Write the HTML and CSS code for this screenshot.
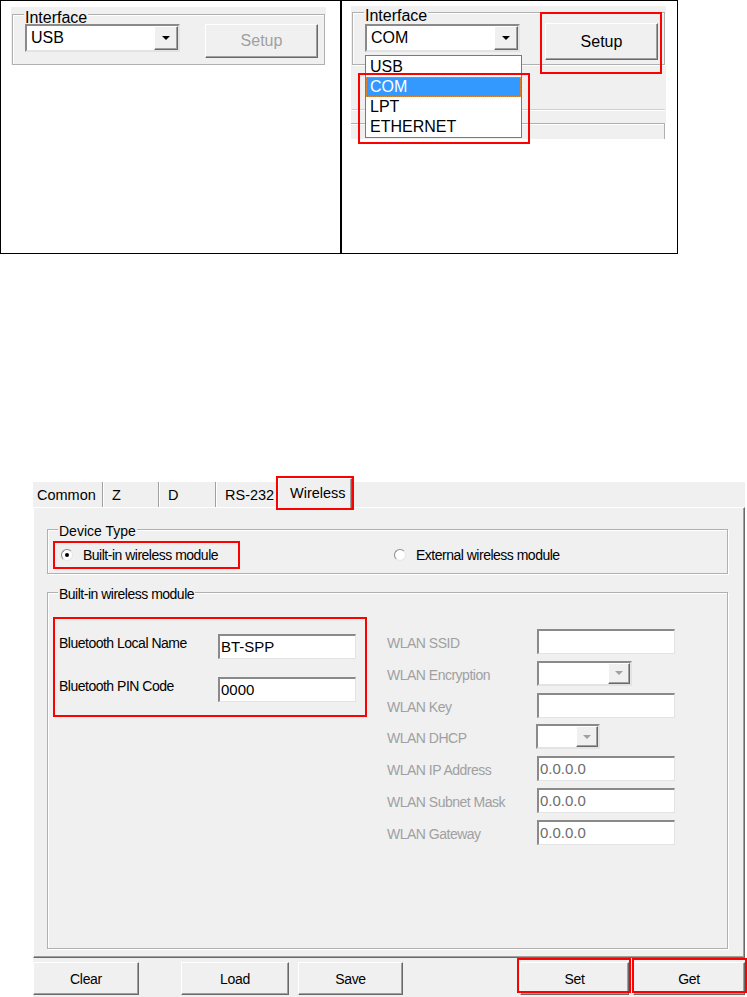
FILE: index.html
```html
<!DOCTYPE html>
<html>
<head>
    <meta charset="utf-8">
    <title>Printer interface settings</title>
    <link rel="stylesheet" href="styles.css">
</head>
<body>
    <div class="cmp">
        <div class="cell">
            <div class="win win-a">
                <div class="grp">
                    <span class="glabel">Interface</span>
                    <div class="iface">
                        <div class="combo"><span>USB</span><span class="drop"></span></div>
                        <button class="btn setup" disabled>Setup</button>
                    </div>
                </div>
            </div>
        </div>
        <div class="cell">
            <div class="win win-b">
                <div class="grp">
                    <span class="glabel">Interface</span>
                    <div class="iface">
                        <div class="combo"><span>COM</span><span class="drop"></span></div>
                        <button class="btn setup tall">Setup</button>
                    </div>
                </div>
                <div class="rule"></div>
                <div class="grp-cut"></div>
            </div>
            <ul class="droplist">
                <li>USB</li>
                <li class="sel">COM</li>
                <li>LPT</li>
                <li>ETHERNET</li>
            </ul>
            <div class="mark mark-setup"></div>
            <div class="mark mark-list"></div>
        </div>
    </div>

    <div class="dlg">
        <div class="tabs">
            <span class="tab t-common">Common</span>
            <span class="tab t-z">Z</span>
            <span class="tab t-d">D</span>
            <span class="tab t-rs">RS-232</span>
            <span class="tab on">Wireless</span>
        </div>
        <div class="page">
            <div class="grp dev">
                <span class="glabel">Device Type</span>
                <div class="dev-row">
                    <label class="radio hl"><span class="dot on"></span>Built-in wireless module</label>
                    <label class="radio ext"><span class="dot"></span>External wireless module</label>
                </div>
            </div>
            <div class="grp mod">
                <span class="glabel tight">Built-in wireless module</span>
                <div class="mod-cols">
                    <div class="bt">
                        <div class="frow"><span class="flabel">Bluetooth Local Name</span><span class="field">BT-SPP</span></div>
                        <div class="frow"><span class="flabel">Bluetooth PIN Code</span><span class="field">0000</span></div>
                    </div>
                    <div class="wlan">
                        <div class="frow"><span class="flabel">WLAN SSID</span><span class="field"></span></div>
                        <div class="frow"><span class="flabel">WLAN Encryption</span><span class="combo sm enc"><span class="drop off"></span></span></div>
                        <div class="frow"><span class="flabel">WLAN Key</span><span class="field"></span></div>
                        <div class="frow"><span class="flabel">WLAN DHCP</span><span class="combo sm dhcp"><span class="drop off"></span></span></div>
                        <div class="frow"><span class="flabel">WLAN IP Address</span><span class="field">0.0.0.0</span></div>
                        <div class="frow"><span class="flabel">WLAN Subnet Mask</span><span class="field">0.0.0.0</span></div>
                        <div class="frow"><span class="flabel">WLAN Gateway</span><span class="field">0.0.0.0</span></div>
                    </div>
                </div>
            </div>
        </div>
        <div class="actions">
            <button class="btn w-clear">Clear</button>
            <button class="btn w-load">Load</button>
            <button class="btn w-save">Save</button>
            <button class="btn w-set">Set</button>
            <button class="btn w-get">Get</button>
            <div class="mark mark-set"></div>
            <div class="mark mark-get"></div>
        </div>
    </div>
</body>
</html>
```

FILE: styles.css
```css
body{
    margin: 0;
    font-family: "Liberation Sans", Arial, Helvetica, sans-serif;
    color: #000;
    background: #fff;
}

/* top comparison table */
.cmp{
    display: grid;
    grid-template-columns: 339px 337px;
    width: 678px;
    height: 254px;
    box-sizing: border-box;
    border: 1px solid #000;
}
.cell{
    position: relative;
    padding: 6px 0 0 10px;
}
.cell + .cell{
    border-left: 2px solid #000;
    padding: 5px 0 0 9px;
}

.win{
    width: 315px;
    box-sizing: border-box;
    background: #f0f0f0;
    padding: 0 1px;
    overflow: hidden;
}
.win-a{
    height: 58px;
    padding-top: 7px;
}
.win-a .grp{
    height: 51px;
    box-sizing: border-box;
}
.win-b{
    height: 133px;
    padding-top: 6px;
}
.win-b .grp{
    height: 53px;
    box-sizing: border-box;
}

/* group boxes */
.grp{
    border: 1px solid #b0b0b0;
    box-shadow: inset 1px 1px 0 #fff, 1px 1px 0 #fff;
}
.glabel{
    display: block;
    width: fit-content;
    background: #f0f0f0;
    padding: 0 1px;
    font-size: 14px;
    line-height: 16px;
    margin: -7px 0 0 10px;
}
.glabel.tight{
    letter-spacing: -0.5px;
}
.win .glabel{
    font-size: 16px;
    line-height: 14px;
    margin: -4px 0 0 11px;
}

.iface{
    display: flex;
    align-items: flex-start;
    padding-left: 12px;
    margin-top: -1px;
}
.win-b .iface{
    margin-top: 1px;
}

.combo{
    display: flex;
    align-items: center;
    justify-content: space-between;
    width: 155px;
    height: 28px;
    box-sizing: border-box;
    background: #fff;
    border: 2px solid;
    border-color: #8a8a8a #e3e3e3 #e3e3e3 #8a8a8a;
    padding-left: 4px;
    font-size: 16px;
}
.drop{
    display: flex;
    align-items: center;
    justify-content: center;
    width: 24px;
    height: 24px;
    box-sizing: border-box;
    background: #f0f0f0;
    border: 1px solid;
    border-color: #fff #696969 #696969 #fff;
    box-shadow: inset -1px -1px 0 #a0a0a0;
}
.drop::after{
    content: "";
    border-left: 4px solid transparent;
    border-right: 4px solid transparent;
    border-top: 4px solid #000;
}
.drop.off::after{
    border-top-color: #a0a0a0;
}

.btn{
    font-family: inherit;
    font-size: 14px;
    letter-spacing: -0.3px;
    color: #000;
    background: #f0f0f0;
    border: 1px solid;
    border-color: #fff #696969 #696969 #fff;
    box-shadow: inset -1px -1px 0 #a0a0a0;
    padding: 0;
    height: 33px;
}
.btn:disabled{
    color: #a0a0a0;
}
.setup{
    font-size: 16px;
    letter-spacing: 0;
    width: 113px;
    height: 34px;
    margin-left: 25px;
}
.setup.tall{
    height: 37px;
    margin-top: -1px;
}

.rule{
    margin-top: 44px;
    border-top: 1px solid #cfcfcf;
    border-bottom: 1px solid #fff;
}
.grp-cut{
    margin: 12px 0 0 -2px;
    height: 20px;
    border-top: 1px solid #b0b0b0;
    border-right: 1px solid #b0b0b0;
    box-shadow: inset 0 1px 0 #fff, 1px 0 0 #fff;
}

.droplist{
    position: absolute;
    left: 23px;
    top: 54px;
    width: 157px;
    height: 83px;
    box-sizing: border-box;
    margin: 0;
    padding: 1px 0 0;
    list-style: none;
    background: #fff;
    border: 1px solid #7a7a7a;
    font-size: 16px;
    line-height: 20px;
}
.droplist li{
    padding-left: 4px;
}
.droplist .sel{
    background: #3399ff;
    color: #fff;
    outline: 1px dotted #e08a3a;
    outline-offset: -1px;
}

/* red callouts */
.mark{
    position: absolute;
    box-sizing: border-box;
    border: 2px solid #f00;
}
.mark-setup{
    left: 198px;
    top: 11px;
    width: 122px;
    height: 62px;
}
.mark-list{
    left: 16px;
    top: 72px;
    width: 172px;
    height: 71px;
}

/* wireless dialog */
.dlg{
    width: 712px;
    margin: 224px 0 0 33px;
    background: #f0f0f0;
}
.tabs{
    display: flex;
    align-items: flex-end;
    height: 29px;
    background: linear-gradient(#fff 4px, #f0f0f0 4px);
}
.tab{
    height: 25px;
    box-sizing: border-box;
    padding: 5px 0 0 9px;
    font-size: 14.5px;
    line-height: 16px;
    border-right: 1px solid #a0a0a0;
    box-shadow: 1px 0 0 #fff;
}
.t-common{ width: 70px; padding-left: 4px; }
.t-z{ width: 56px; }
.t-d{ width: 57px; }
.t-rs{ width: 62px; }
.tab.on{
    position: relative;
    z-index: 1;
    width: 74px;
    height: 30px;
    margin-bottom: -1px;
    padding: 6px 0 0 11px;
    background: #f0f0f0;
    border-top: 1px solid #fff;
    border-left: 1px solid #fff;
    border-right: 1px solid #696969;
    box-shadow: inset -1px 0 0 #a0a0a0;
    outline: 2px solid #f00;
}

.page{
    display: flex;
    flex-direction: column;
    height: 451px;
    box-sizing: border-box;
    border: 1px solid #fff;
    border-right-color: #696969;
    border-bottom-color: #696969;
    box-shadow: inset -1px -1px 0 #a0a0a0;
    padding: 21px 16px 8px 13px;
}

.dev-row{
    display: flex;
    align-items: center;
    margin-top: 2px;
    padding: 0 0 4px 5px;
}
.radio{
    display: flex;
    align-items: center;
    font-size: 14px;
    letter-spacing: -0.5px;
}
.radio.hl{
    width: 187px;
    height: 28px;
    box-sizing: border-box;
    border: 2px solid #f00;
    padding-left: 6px;
}
.radio.ext{
    margin-left: 154px;
}
.dot{
    display: flex;
    align-items: center;
    justify-content: center;
    width: 12px;
    height: 12px;
    box-sizing: border-box;
    border-radius: 50%;
    background: #fff;
    border: 1px solid;
    border-color: #8a8a8a #e6e6e6 #e6e6e6 #8a8a8a;
    margin-right: 10px;
}
.dot.on::after{
    content: "";
    width: 4px;
    height: 4px;
    border-radius: 50%;
    background: #000;
}

.mod{
    flex: 1;
    margin-top: 18px;
}
.mod-cols{
    display: flex;
    align-items: flex-start;
    padding: 15px 0 0 5px;
}
.bt{
    width: 314px;
    height: 100px;
    box-sizing: border-box;
    border: 2px solid #f00;
    padding: 15px 0 0 4px;
}
.frow{
    display: flex;
    align-items: flex-start;
    height: 25px;
}
.bt .frow + .frow{
    margin-top: 18px;
}
.flabel{
    font-size: 14px;
    line-height: 16px;
    letter-spacing: -0.5px;
}
.bt .flabel{
    width: 159px;
    padding-top: 1px;
}
.wlan{
    display: grid;
    row-gap: 6.8px;
    margin: 12px 0 0 20px;
}
.wlan .flabel{
    width: 150px;
    padding-top: 6px;
    color: #a0a0a0;
}

.field{
    width: 138px;
    height: 25px;
    box-sizing: border-box;
    background: #fff;
    border-style: solid;
    border-width: 2px 1px 1px 2px;
    border-color: #8a8a8a #e3e3e3 #e3e3e3 #8a8a8a;
    padding-left: 1px;
    font-size: 15px;
    line-height: 22px;
}
.wlan .field{
    color: #6d6d6d;
}
.combo.sm{
    justify-content: flex-end;
    height: 25px;
    padding-left: 0;
}
.combo.sm .drop{
    width: 22px;
    height: 21px;
}
.enc{
    width: 95px;
}
.dhcp{
    width: 64px;
    margin-left: -1px;
}

.actions{
    position: relative;
    display: flex;
    align-items: flex-start;
    height: 39px;
    box-sizing: border-box;
    padding-top: 4px;
}
.w-clear{ width: 106px; }
.w-load{ width: 108px; margin-left: 42px; }
.w-save{ width: 105px; margin-left: 9px; }
.w-set{ width: 109px; margin-left: 117px; }
.w-get{ width: 112px; margin-left: 4px; }
.mark-set{
    left: 484px;
    top: 0;
    width: 114px;
    height: 35px;
}
.mark-get{
    left: 599px;
    top: 0;
    width: 115px;
    height: 35px;
}
```
